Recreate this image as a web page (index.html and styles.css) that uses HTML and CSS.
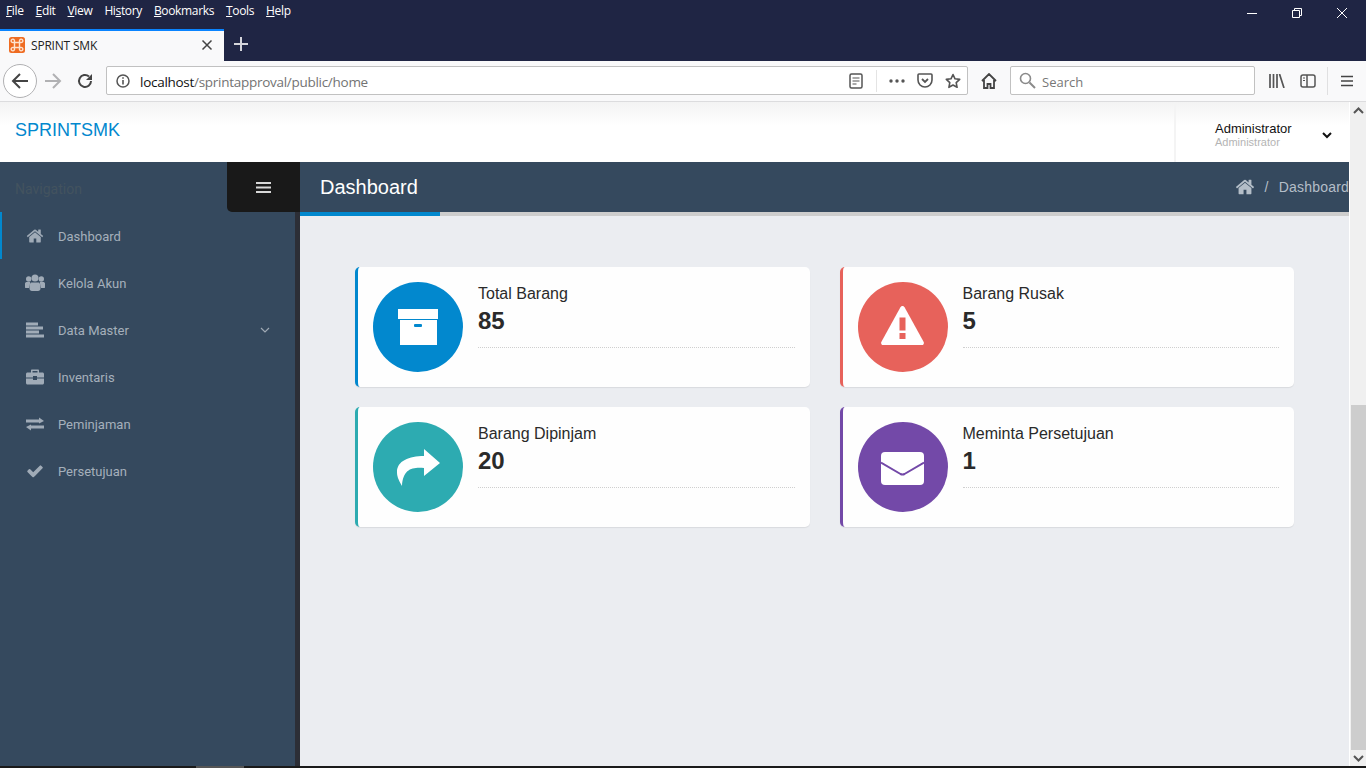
FILE: index.html
```html
<!DOCTYPE html>
<html lang="en">
<head>
    <meta charset="UTF-8">
    <title>SPRINT SMK</title>
    <link rel="stylesheet" href="styles.css">
</head>
<body>
    <!-- Browser chrome -->
    <div class="titlebar">
        <div class="menubar-row">
            <nav class="menubar">
                <span><u>F</u>ile</span>
                <span><u>E</u>dit</span>
                <span><u>V</u>iew</span>
                <span>Hi<u>s</u>tory</span>
                <span><u>B</u>ookmarks</span>
                <span><u>T</u>ools</span>
                <span><u>H</u>elp</span>
            </nav>
            <div class="window-controls">
                <svg width="12" height="12" viewBox="0 0 12 12"><path d="M1 6.500h10" stroke="#fff" fill="none"/></svg>
                <svg width="12" height="12" viewBox="0 0 12 12"><path d="M1.500 3.500h7v7h-7zM3.500 3.500v-2h7v7h-2" stroke="#fff" fill="none"/></svg>
                <svg width="12" height="12" viewBox="0 0 12 12"><path d="M1 1l10 10M11 1L1 11" stroke="#fff" fill="none"/></svg>
            </div>
        </div>
        <div class="tabstrip">
            <div class="tab">
                <svg class="tab-icon" width="16" height="16" viewBox="0 0 16 16">
                    <rect width="16" height="16" rx="2.500" fill="#ef6c22"/>
                    <path d="M5.500 5.500h5v5h-5zM5.500 5.500H4.200a1.700 1.700 0 1 1 1.300-1.300zM10.500 5.500h1.300a1.700 1.700 0 1 0-1.300-1.300zM5.500 10.500H4.200a1.700 1.700 0 1 0 1.300 1.300zM10.500 10.500h1.300a1.700 1.700 0 1 1-1.300 1.300z" fill="none" stroke="#fde3d0" stroke-width="1.400"/>
                </svg>
                <span class="tab-title">SPRINT SMK</span>
                <svg class="tab-close" width="12" height="12" viewBox="0 0 12 12"><path d="M1.500 1.500l9 9M10.500 1.500l-9 9" stroke="#444" stroke-width="1.500" fill="none"/></svg>
            </div>
            <svg class="new-tab" width="14" height="14" viewBox="0 0 14 14"><path d="M7 0v14M0 7h14" stroke="#d4d5db" stroke-width="2" fill="none"/></svg>
        </div>
    </div>

    <div class="toolbar">
        <div class="back-btn">
            <svg width="18" height="16" viewBox="0 0 18 16"><path d="M9 1L2 8l7 7M2 8h15" stroke="#444" stroke-width="2" fill="none"/></svg>
        </div>
        <svg class="forward" width="18" height="16" viewBox="0 0 18 16"><path d="M9 1l7 7-7 7M16 8H1" stroke="#b1b1b3" stroke-width="2" fill="none"/></svg>
        <svg class="reload" width="16" height="16" viewBox="0 0 16 16"><path d="M14 8a6 6 0 1 1-2-4.500" stroke="#444" stroke-width="2" fill="none"/><path d="M15 1v6H9z" fill="#444"/></svg>
        <div class="urlbar">
            <svg class="url-info" width="14" height="14" viewBox="0 0 14 14"><circle cx="7" cy="7" r="6" stroke="#555" stroke-width="1.500" fill="none"/><path d="M7 6v4.500M7 3.300v1.500" stroke="#555" stroke-width="1.600"/></svg>
            <span class="url-text">localhost<span class="url-path">/sprintapproval/public/home</span></span>
            <svg class="url-reader" width="14" height="16" viewBox="0 0 14 16"><rect x="1" y="1" width="12" height="14" rx="1.500" stroke="#555" stroke-width="1.500" fill="none"/><path d="M3.500 5h7M3.500 8h7M3.500 11h4" stroke="#555" stroke-width="1.200"/></svg>
            <span class="url-sep"></span>
            <svg class="url-dots" width="16" height="4" viewBox="0 0 16 4"><circle cx="2" cy="2" r="1.700" fill="#555"/><circle cx="8" cy="2" r="1.700" fill="#555"/><circle cx="14" cy="2" r="1.700" fill="#555"/></svg>
            <svg class="url-pocket" width="16" height="15" viewBox="0 0 16 15"><path d="M2 1h12a1 1 0 0 1 1 1v5a7 7 0 0 1-14 0V2a1 1 0 0 1 1-1z" stroke="#555" stroke-width="1.600" fill="none"/><path d="M5 6l3 3 3-3" stroke="#555" stroke-width="1.800" fill="none"/></svg>
            <svg class="url-star" width="16" height="16" viewBox="0 0 16 16"><path d="M8 1.500l2 4.300 4.700.6-3.500 3.200.9 4.700L8 12l-4.100 2.300.9-4.700L1.300 6.400 6 5.800z" stroke="#555" stroke-width="1.600" fill="none" stroke-linejoin="round"/></svg>
        </div>
        <svg class="tool-home" width="16" height="16" viewBox="0 0 16 16"><path d="M1 8l7-7 7 7M3 7v8h3.500v-4h3v4H13V7" stroke="#444" stroke-width="1.800" fill="none"/></svg>
        <div class="searchbar">
            <svg width="17" height="17" viewBox="0 0 17 17"><circle cx="6.500" cy="6.500" r="5" stroke="#8a8a8a" stroke-width="1.600" fill="none"/><path d="M10.500 10.500L16 16" stroke="#8a8a8a" stroke-width="2"/></svg>
            <span>Search</span>
        </div>
        <svg class="tool-library" width="16" height="14" viewBox="0 0 16 14"><path d="M1 0v14M4.500 0v14M8 0v14M10.500 0L15 14" stroke="#555" stroke-width="1.700" fill="none"/></svg>
        <svg class="tool-sidebar" width="16" height="14" viewBox="0 0 16 14"><rect x="1" y="1" width="14" height="12" rx="2" stroke="#555" stroke-width="1.500" fill="none"/><path d="M7 1v12" stroke="#555" stroke-width="1.500"/><path d="M3 4h2M3 6.500h2" stroke="#555"/></svg>
        <span class="tool-sep"></span>
        <svg class="tool-menu" width="12" height="12" viewBox="0 0 12 12"><path d="M0 1.500h12M0 6h12M0 10.500h12" stroke="#444" stroke-width="1.500"/></svg>
    </div>

    <!-- Page -->
    <div class="viewport">
        <div class="page">
            <header class="header">
                <a class="brand">SPRINTSMK</a>
                <div class="user-menu">
                    <div class="user-names">
                        <div class="user-name">Administrator</div>
                        <div class="user-role">Administrator</div>
                    </div>
                    <svg width="10" height="7" viewBox="0 0 10 7"><path d="M1 1l4 4 4-4" stroke="#111" stroke-width="2" fill="none"/></svg>
                </div>
            </header>

            <div class="app-body">
                <aside class="sidebar">
                    <div class="sidebar-head">
                        <span class="nav-label">Navigation</span>
                        <div class="toggler">
                            <svg width="15" height="11" viewBox="0 0 15 11"><path d="M0 1h15M0 5.500h15M0 10h15" stroke="#d8d8d8" stroke-width="2"/></svg>
                        </div>
                    </div>
                    <ul class="nav">
                        <li class="nav-item active">
                            <svg class="nav-icon" viewBox="0 0 1792 1792"><path d="M1472 992v480q0 26-19 45t-45 19h-384v-384h-256v384h-384q-26 0-45-19t-19-45v-480q0-1 .5-3t.5-3l575-474 575 474q1 2 1 6zm223-69l-62 74q-8 9-21 11h-3q-13 0-21-7l-692-577-692 577q-12 8-24 7-13-2-21-11l-62-74q-8-10-7-23.500t11-21.500l719-599q32-26 76-26t76 26l244 204v-195q0-14 9-23t23-9h192q14 0 23 9t9 23v408l219 182q10 8 11 21.500t-7 23.500z"/></svg>
                            <span>Dashboard</span>
                        </li>
                        <li class="nav-item">
                            <svg class="nav-icon nav-icon-wide" viewBox="0 0 20 18"><circle cx="3.700" cy="5" r="2.700"/><circle cx="16.300" cy="5" r="2.700"/><circle cx="10" cy="4" r="3.500"/><path d="M0 9.500C0 8.500 1 8 2 8h3c.5 1.500-.5 2.500-1 6H1c-1 0-1-.5-1-1.500zM20 9.500C20 8.500 19 8 18 8h-3c-.5 1.500.5 2.500 1 6h3c1 0 1-.5 1-1.500zM6.500 8.500h7c1 0 2 1.500 2 6 0 1.500-1 2.500-2.500 2.500H7c-1.500 0-2.500-1-2.500-2.500 0-4.500 1-6 2-6z"/></svg>
                            <span>Kelola Akun</span>
                        </li>
                        <li class="nav-item">
                            <svg class="nav-icon" viewBox="0 0 18 15"><rect width="12" height="3"/><rect y="4" width="17" height="3"/><rect y="8" width="13" height="3"/><rect y="12" width="18" height="3"/></svg>
                            <span>Data Master</span>
                            <svg class="nav-chevron" width="10" height="6" viewBox="0 0 10 6"><path d="M1 1l4 4 4-4" stroke="#9fa9b4" stroke-width="1.200" fill="none"/></svg>
                        </li>
                        <li class="nav-item">
                            <svg class="nav-icon" viewBox="0 0 18 15"><path d="M6 0h6c.6 0 1 .4 1 1v2h3.500c.8 0 1.500.7 1.500 1.500V8H11V6.500H7V8H0V4.500C0 3.700.7 3 1.500 3H5V1c0-.6.400-1 1-1zm.5 1.500V3h5V1.500zM0 9h7v1.500h4V9h7v4.500c0 .8-.7 1.500-1.500 1.500h-15C.7 15 0 14.300 0 13.500z"/></svg>
                            <span>Inventaris</span>
                        </li>
                        <li class="nav-item">
                            <svg class="nav-icon" viewBox="0 0 18 13"><path d="M0 2h13V0l5 3.500L13 6V5H0zM18 8v3H5v2L0 9.500 5 7v1z"/></svg>
                            <span>Peminjaman</span>
                        </li>
                        <li class="nav-item">
                            <svg class="nav-icon" viewBox="0 0 1792 1792"><path d="M1671 566q0 40-28 68l-724 724-136 136q-28 28-68 28t-68-28l-136-136-362-362q-28-28-28-68t28-68l136-136q28-28 68-28t68 28l294 295 656-657q28-28 68-28t68 28l136 136q28 28 28 68z"/></svg>
                            <span>Persetujuan</span>
                        </li>
                    </ul>
                </aside>

                <main class="main">
                    <div class="main-title">
                        <h1>Dashboard</h1>
                        <div class="breadcrumb">
                            <svg width="20" height="20" viewBox="0 0 1792 1792"><path d="M1472 992v480q0 26-19 45t-45 19h-384v-384h-256v384h-384q-26 0-45-19t-19-45v-480q0-1 .5-3t.5-3l575-474 575 474q1 2 1 6zm223-69l-62 74q-8 9-21 11h-3q-13 0-21-7l-692-577-692 577q-12 8-24 7-13-2-21-11l-62-74q-8-10-7-23.500t11-21.500l719-599q32-26 76-26t76 26l244 204v-195q0-14 9-23t23-9h192q14 0 23 9t9 23v408l219 182q10 8 11 21.500t-7 23.500z"/></svg>
                            <span class="crumb-sep">/</span>
                            <span>Dashboard</span>
                        </div>
                    </div>
                    <div class="title-rule"><span></span></div>

                    <div class="cards">
                        <div class="card card-blue">
                            <div class="card-circle">
                                <svg width="40" height="36" viewBox="0 0 40 36"><path d="M0 0h40v10H0zM2 11h37v25H2z" fill="#fff"/><rect x="16" y="15" width="8" height="3" rx="1" fill="#0288ce"/></svg>
                            </div>
                            <div class="card-info">
                                <div class="card-title">Total Barang</div>
                                <div class="card-value">85</div>
                            </div>
                        </div>
                        <div class="card card-red">
                            <div class="card-circle icon-up">
                                <svg width="43" height="39" viewBox="0 0 43 39"><path d="M21.500 0c1 0 1.700.6 2.200 1.500l19 34.500c.6 1.300-.2 3-1.700 3H2c-1.500 0-2.300-1.700-1.700-3l19-34.500C19.800.6 20.500 0 21.500 0z" fill="#fff"/><path d="M18.500 11.500h6v13h-6zM18.500 27h6v6h-6z" fill="#e7625b"/></svg>
                            </div>
                            <div class="card-info">
                                <div class="card-title">Barang Rusak</div>
                                <div class="card-value">5</div>
                            </div>
                        </div>
                        <div class="card card-teal">
                            <div class="card-circle">
                                <svg width="43" height="37" viewBox="0 0 43 37"><path d="M27 0l16 14-16 13v-8C15 18 6 20 5 37 1 30 0 27 0 23 0 12 12 7 27 7z" fill="#fff"/></svg>
                            </div>
                            <div class="card-info">
                                <div class="card-title">Barang Dipinjam</div>
                                <div class="card-value">20</div>
                            </div>
                        </div>
                        <div class="card card-purple">
                            <div class="card-circle icon-down">
                                <svg width="43" height="33" viewBox="0 0 43 33"><rect width="43" height="33" rx="4" fill="#fff"/><path d="M0 10.500l19.500 11.500c1.300.7 2.700.7 4 0L43 10.500" stroke="#7349a8" stroke-width="2" fill="none"/></svg>
                            </div>
                            <div class="card-info">
                                <div class="card-title">Meminta Persetujuan</div>
                                <div class="card-value">1</div>
                            </div>
                        </div>
                    </div>
                </main>
            </div>
        </div>

        <div class="scrollbar">
            <div class="scroll-btn"><svg width="11" height="7" viewBox="0 0 11 7"><path d="M1 6l4.500-4.500L10 6" stroke="#555" stroke-width="2" fill="none"/></svg></div>
            <div class="scroll-space"></div>
            <div class="scroll-thumb"></div>
            <div class="scroll-btn"><svg width="11" height="7" viewBox="0 0 11 7"><path d="M1 1l4.500 4.500L10 1" stroke="#555" stroke-width="2" fill="none"/></svg></div>
        </div>
    </div>
    <div class="taskbar-edge"><span></span></div>
</body>
</html>
```

FILE: styles.css
```css
* {
    box-sizing: border-box;
}
body {
    margin: 0;
    height: 768px;
    overflow: hidden;
    display: flex;
    flex-direction: column;
    font-family: "Liberation Sans", Arial, sans-serif;
    background: #ebedf1;
}

/* browser chrome */
.titlebar {
    height: 61px;
    background: #1f2544;
    font-family: "Open Sans", sans-serif;
}
.menubar-row {
    height: 29px;
    display: flex;
    justify-content: space-between;
}
.menubar {
    display: flex;
    gap: 12px;
    padding: 2px 0 0 6px;
    color: #fff;
    font-size: 12px;
    line-height: 18px;
    letter-spacing: -0.35px;
}
.window-controls {
    display: flex;
    gap: 33px;
    padding: 7px 18px 0 0;
}
.window-controls svg {
    display: block;
}
.tabstrip {
    display: flex;
    align-items: center;
    height: 32px;
}
.tab {
    width: 224px;
    height: 32px;
    background: #f9f9fa;
    border-top: 2px solid #0a84ff;
    display: flex;
    align-items: center;
    padding: 0 0 2px 9px;
}
.tab-title {
    margin-left: 6px;
    font-size: 12px;
    color: #222;
    letter-spacing: -0.2px;
}
.tab-close {
    margin-left: auto;
    margin-right: 11px;
}
.new-tab {
    margin: 0 0 2px 10px;
}
.toolbar {
    height: 41px;
    background: #f9f9fa;
    border-bottom: 1px solid #dcdcde;
    display: flex;
    align-items: center;
    padding: 0 0 1px 3px;
    font-family: "Open Sans", sans-serif;
}
.back-btn {
    width: 34px;
    height: 34px;
    border-radius: 50%;
    background: #fff;
    border: 1px solid #b1b1b3;
    display: flex;
    align-items: center;
    justify-content: center;
}
.forward {
    margin-left: 7px;
}
.reload {
    margin-left: 15px;
}
.urlbar {
    width: 862px;
    height: 29px;
    margin-left: 13px;
    background: #fff;
    border: 1px solid #c1c1c1;
    border-radius: 2px;
    display: flex;
    align-items: center;
    padding-left: 9px;
}
.url-text {
    margin-left: 10px;
    padding-top: 2px;
    font-size: 13.5px;
    letter-spacing: -0.28px;
    color: #111;
}
.url-path {
    color: #737373;
}
.url-reader {
    margin-left: auto;
}
.url-sep {
    width: 1px;
    height: 22px;
    background: #e4e4e4;
    margin: 0 12px 0 13px;
}
.url-pocket {
    margin-left: 12px;
}
.url-star {
    margin: 0 6px 0 12px;
}
.tool-home {
    margin-left: 13px;
}
.searchbar {
    width: 245px;
    height: 29px;
    margin-left: 13px;
    background: #fff;
    border: 1px solid #c1c1c1;
    border-radius: 2px;
    display: flex;
    align-items: center;
    gap: 6px;
    padding-left: 8px;
    font-size: 13px;
    color: #777;
}
.searchbar span {
    padding-top: 2px;
}
.tool-library {
    margin-left: 14px;
}
.tool-sidebar {
    margin-left: 15px;
}
.tool-sep {
    width: 1px;
    height: 28px;
    background: #e0e0e1;
    margin: 0 13px 0 11px;
}

/* page */
.viewport {
    flex: 1;
    display: flex;
    min-height: 0;
}
.page {
    flex: 1;
    display: flex;
    flex-direction: column;
    min-width: 0;
    overflow: hidden;
}
.header {
    height: 60px;
    background: linear-gradient(#f3f3f3, #fff 40%);
    display: flex;
    align-items: center;
    justify-content: space-between;
    padding-left: 15px;
}
.brand {
    font-size: 18px;
    color: #0288ce;
    padding-bottom: 4px;
}
.user-menu {
    width: 175px;
    height: 60px;
    border-left: 2px solid #f4f4f4;
    display: flex;
    align-items: center;
    padding: 6px 0 0 39px;
}
.user-names {
    width: 107px;
}
.user-name {
    font-size: 13px;
    line-height: 15px;
    color: #111;
}
.user-role {
    font-size: 11px;
    line-height: 13px;
    color: #b4b4b4;
}
.app-body {
    flex: 1;
    display: flex;
    min-height: 0;
}
.sidebar {
    width: 300px;
    display: flex;
    flex-direction: column;
}
.sidebar-head {
    height: 50px;
    background: #35495e;
    display: flex;
    align-items: center;
    justify-content: space-between;
    padding-left: 15px;
}
.nav-label {
    font-size: 14px;
    color: #43535f;
    font-family: Roboto, sans-serif;
    padding-top: 4px;
}
.toggler {
    width: 73px;
    height: 50px;
    background: #191919;
    border-bottom-left-radius: 5px;
    display: flex;
    align-items: center;
    justify-content: center;
}
.nav {
    flex: 1;
    list-style: none;
    margin: 0;
    padding: 0;
    background: #35495e;
    border-right: 5px solid #2c2e36;
}
.nav-item {
    height: 47px;
    display: flex;
    align-items: center;
    padding: 0 25px 0 24px;
    border-left: 2px solid transparent;
    font-family: Roboto, sans-serif;
    font-size: 13px;
    color: #a5b0bb;
}
.nav-item span {
    padding-top: 2px;
}
.nav-item.active {
    border-left-color: #0288ce;
}
.nav-icon {
    width: 18px;
    height: 18px;
    margin-right: 14px;
    fill: #a0abb7;
    flex: none;
}
.nav-icon-wide {
    width: 20px;
    margin: 0 13px 0 -1px;
}
.nav-chevron {
    margin-left: auto;
}
.main {
    flex: 1;
    display: flex;
    flex-direction: column;
    min-width: 0;
}
.main-title {
    height: 50px;
    background: #35495e;
    display: flex;
    align-items: center;
    justify-content: space-between;
    padding-left: 20px;
    white-space: nowrap;
}
.main-title h1 {
    margin: 0;
    font-size: 20px;
    font-weight: normal;
    color: #fff;
}
.breadcrumb {
    display: flex;
    align-items: center;
    font-size: 14px;
    letter-spacing: 0.2px;
    color: #b4bec8;
    fill: #b4bec8;
}
.crumb-sep {
    margin: 0 10px;
}
.title-rule {
    height: 4px;
    background: #cdcdcd;
}
.title-rule span {
    display: block;
    width: 140px;
    height: 4px;
    background: #0288ce;
}
.cards {
    display: grid;
    grid-template-columns: 1fr 1fr;
    gap: 20px 30px;
    padding: 51px 55px 0;
}
.card {
    height: 120px;
    background: #fefefe;
    border-left: 3px solid;
    border-radius: 5px;
    box-shadow: 0 1px 1px rgba(0, 0, 0, 0.08);
    display: flex;
    padding: 15px;
}
.card-circle {
    width: 90px;
    height: 90px;
    border-radius: 50%;
    flex: none;
    display: flex;
    align-items: center;
    justify-content: center;
}
.icon-up {
    padding-bottom: 3px;
}
.icon-down {
    padding-top: 3px;
}
.card-blue {
    border-left-color: #0288ce;
}
.card-blue .card-circle {
    background: #0288ce;
}
.card-red {
    border-left-color: #e7625b;
}
.card-red .card-circle {
    background: #e7625b;
}
.card-teal {
    border-left-color: #2dabb1;
}
.card-teal .card-circle {
    background: #2dabb1;
}
.card-purple {
    border-left-color: #7349a8;
}
.card-purple .card-circle {
    background: #7349a8;
}
.card-info {
    flex: 1;
    height: 66px;
    margin-left: 15px;
    padding-top: 1px;
    border-bottom: 1px dotted #cfcfcf;
}
.card-title {
    font-size: 16px;
    line-height: 22px;
    color: #2a2a2a;
}
.card-value {
    font-size: 24px;
    font-weight: bold;
    line-height: 32px;
    color: #2a2a2a;
}

/* scrollbar */
.scrollbar {
    width: 17px;
    background: #f0f0f0;
    display: flex;
    flex-direction: column;
    padding-left: 1px;
    border-left: 1px solid #fff;
}
.scroll-btn {
    height: 16px;
    display: flex;
    align-items: center;
    justify-content: center;
}
.scroll-space {
    flex: 1;
}
.scroll-thumb {
    height: 345px;
    background: #cdcdcd;
}
.taskbar-edge {
    height: 2px;
    background: #1a1a1a;
}
.taskbar-edge span {
    display: block;
    width: 48px;
    height: 2px;
    margin-left: 196px;
    background: #555;
}
```
